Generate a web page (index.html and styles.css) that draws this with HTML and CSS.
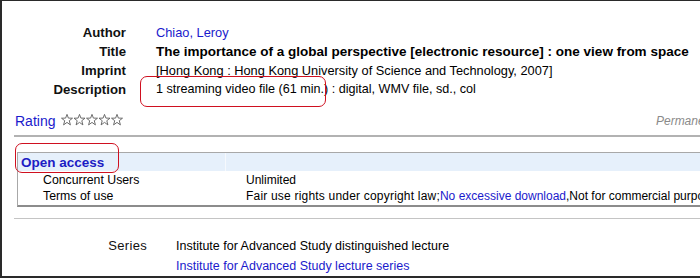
FILE: index.html
```html
<!DOCTYPE html>
<html lang="en">
<head>
    <meta charset="UTF-8">
    <title>Record detail</title>
    <link rel="stylesheet" href="styles.css">
</head>
<body>
    <div class="frame">
        <div class="page">
            <div class="bib">
                <div class="lbl">Author</div>
                <div class="val"><a href="#">Chiao, Leroy</a></div>
                <div class="lbl">Title</div>
                <div class="val title">The importance of a global perspective [electronic resource] : one view from space</div>
                <div class="lbl">Imprint</div>
                <div class="val">[Hong Kong : Hong Kong University of Science and Technology, 2007]</div>
                <div class="lbl">Description</div>
                <div class="val desc">1 streaming video file (61 min.) : digital, WMV file, sd., col</div>
            </div>

            <div class="rating-row">
                <span class="rating">
                    <a href="#">Rating</a>
                    <svg class="stars" width="64" height="12" viewBox="0 0 64 12">
                        <g fill="#fff" stroke="#5e5e5e" stroke-width="0.9" stroke-linejoin="round">
                            <polygon points="6,0.4 7.4,4.1 11.5,4.2 8.3,6.7 9.4,10.9 6,8.4 2.6,10.9 3.7,6.7 0.5,4.2 4.6,4.1"/>
                            <polygon transform="translate(12.5 0)" points="6,0.4 7.4,4.1 11.5,4.2 8.3,6.7 9.4,10.9 6,8.4 2.6,10.9 3.7,6.7 0.5,4.2 4.6,4.1"/>
                            <polygon transform="translate(25 0)" points="6,0.4 7.4,4.1 11.5,4.2 8.3,6.7 9.4,10.9 6,8.4 2.6,10.9 3.7,6.7 0.5,4.2 4.6,4.1"/>
                            <polygon transform="translate(37.5 0)" points="6,0.4 7.4,4.1 11.5,4.2 8.3,6.7 9.4,10.9 6,8.4 2.6,10.9 3.7,6.7 0.5,4.2 4.6,4.1"/>
                            <polygon transform="translate(50 0)" points="6,0.4 7.4,4.1 11.5,4.2 8.3,6.7 9.4,10.9 6,8.4 2.6,10.9 3.7,6.7 0.5,4.2 4.6,4.1"/>
                        </g>
                    </svg>
                </span>
                <span class="perma">Permanent link</span>
            </div>

            <div class="rule"></div>

            <div class="access">
                <div class="access-head">
                    <div class="head-cell"><a href="#">Open access</a></div>
                    <div class="head-fill"></div>
                </div>
                <div class="access-body">
                    <div class="access-row">
                        <span class="k">Concurrent Users</span>
                        <span class="v">Unlimited</span>
                    </div>
                    <div class="access-row">
                        <span class="k">Terms of use</span>
                        <span class="v"><span class="spaced">Fair use rights under copyright law;</span><a href="#">No excessive download</a>,Not for commercial purposes</span>
                    </div>
                </div>
            </div>

            <div class="rule thin"></div>

            <div class="series">
                <div class="lbl">Series</div>
                <div class="val">Institute for Advanced Study distinguished lecture</div>
                <div></div>
                <div class="val"><a href="#">Institute for Advanced Study lecture series</a></div>
            </div>
        </div>

        <div class="mark mark-desc"></div>
        <div class="mark mark-open"></div>
    </div>
</body>
</html>
```

FILE: styles.css
```css
body {
    margin: 0;
    overflow: hidden;
    font-family: "Liberation Sans", Arial, sans-serif;
    color: #000;
    background: #fff;
}
a {
    color: #1a1acc;
    text-decoration: none;
}
.frame {
    position: relative;
    height: 278px;
    box-sizing: border-box;
    border-top: 1px solid #2a2a2a;
    border-left: 2px solid #2a2a2a;
    border-bottom: 2px solid #2a2a2a;
    overflow: hidden;
}
.page {
    width: 722px;
    padding: 22px 0 0 12px;
}
.bib {
    display: grid;
    grid-template-columns: 112px auto;
    column-gap: 30px;
    font-size: 12.8px;
    line-height: 19px;
}
.lbl {
    text-align: right;
    font-weight: bold;
    font-size: 13.2px;
    color: #111;
}
.val {
    white-space: nowrap;
}
.title {
    font-weight: bold;
    font-size: 13.5px;
}
.desc {
    font-size: 12.6px;
}
.rating-row {
    display: flex;
    justify-content: space-between;
    align-items: center;
    margin-top: 12px;
    height: 19px;
    padding-left: 1px;
}
.rating {
    display: flex;
    align-items: center;
    gap: 6px;
    font-size: 14px;
}
.stars {
    margin-top: -2px;
}
.perma {
    font-size: 12px;
    font-style: italic;
    color: #8a8a8a;
}
.rule {
    margin-top: 5px;
    height: 2px;
    background: #b2b2b2;
}
.rule.thin {
    margin-top: 11px;
    height: 1px;
    background: #c4c4c4;
}
.access {
    margin: 15px 0 0 3px;
    border-top: 1px solid #a8a8a8;
    border-left: 1px solid #a8a8a8;
    border-bottom: 2px solid #8c8c8c;
}
.access-head {
    display: flex;
    height: 18px;
    background: #e6f0fb;
}
.head-cell {
    width: 204px;
    border-right: 1px solid #f6f9fd;
    padding-left: 3px;
    font-size: 13.5px;
    font-weight: bold;
    line-height: 19px;
}
.head-cell a {
    color: #1c1cc4;
}
.head-fill {
    flex: 1;
}
.access-body {
    padding: 1px 0 1px;
}
.access-row {
    display: flex;
    font-size: 12px;
    line-height: 16px;
    white-space: nowrap;
}
.k {
    width: 203px;
    padding-left: 25px;
    flex-shrink: 0;
    font-size: 12.3px;
}
.spaced {
    letter-spacing: 0.2px;
}
.series {
    display: grid;
    grid-template-columns: 133px auto;
    column-gap: 29px;
    margin-top: 17px;
    font-size: 12.5px;
    line-height: 20px;
}
.series .lbl {
    font-weight: normal;
    font-size: 13px;
    letter-spacing: 0.3px;
}
.mark {
    position: absolute;
    border: 1.5px solid #cf1020;
    border-radius: 7px;
}
.mark-desc {
    left: 138px;
    top: 75px;
    width: 184px;
    height: 29px;
}
.mark-open {
    left: 13px;
    top: 142px;
    width: 102px;
    height: 28px;
}
```
